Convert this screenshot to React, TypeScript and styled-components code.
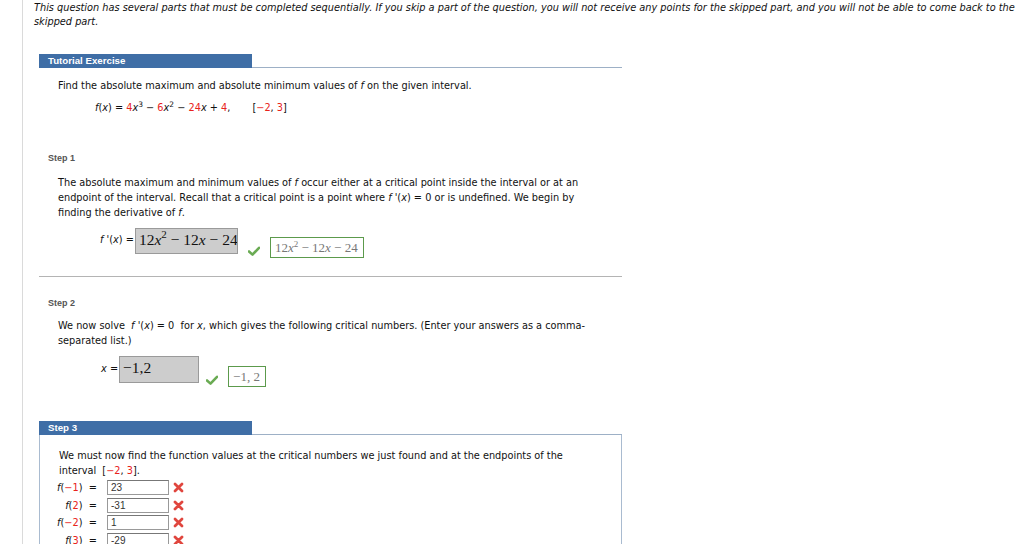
import React from "react";
import styled, { createGlobalStyle } from "styled-components";

const GlobalStyle = createGlobalStyle`
  html, body { margin: 0; padding: 0; background: #fff; }
  body { font-family: "DejaVu Sans", Verdana, sans-serif; color: #111; }
`;

const Page = styled.div`
  width: 1024px;
  height: 544px;
  overflow: hidden;
  display: flex;
`;

const Main = styled.div`
  margin-left: 22px;
  border-left: 1px solid #dadada;
  padding: 0 0 0 11px;
  flex: 1;
`;

const Intro = styled.p`
  margin: 1px 0 0;
  font-style: italic;
  font-size: 9.78px;
  line-height: 14px;
  color: #111;
`;

const Exercise = styled.div`
  margin: 25px 0 0 5px;
  width: 583px;
`;

const HeaderRow = styled.div<{ $top?: number }>`
  display: flex;
  align-items: flex-end;
  margin-top: ${(p) => p.$top ?? 0}px;
`;

const Tab = styled.div`
  width: 204px;
  height: 14px;
  padding-left: 9px;
  background: #3f6ea6;
  color: #fff;
  font-family: "Liberation Sans", Arial, sans-serif;
  font-weight: bold;
  font-size: 9.7px;
  line-height: 14px;
`;

const HeaderLine = styled.div`
  flex: 1;
  border-bottom: 1px solid #9db0c6;
`;

const Para = styled.p<{ $indent?: number; $top?: number }>`
  margin: ${(p) => p.$top ?? 0}px 0 0 ${(p) => p.$indent ?? 19}px;
  font-size: 9.75px;
  line-height: 15px;
  width: 530px;
`;

const Formula = styled.div`
  margin: 7px 0 0 56px;
  font-size: 9.75px;
  line-height: 15px;
  white-space: nowrap;
  sup { font-size: 7.5px; line-height: 0; vertical-align: 4px; }
`;

const Gap = styled.span`
  display: inline-block;
  width: 22px;
`;

const Red = styled.span`
  color: #e8231c;
`;

const I = styled.i``;

const StepLabel = styled.div<{ $top: number }>`
  margin: ${(p) => p.$top}px 0 0 9px;
  font-family: "Liberation Sans", Arial, sans-serif;
  font-weight: bold;
  font-size: 9px;
  line-height: 12px;
  color: #555;
`;

const AnswerRow = styled.div<{ $indent: number; $top: number }>`
  display: flex;
  align-items: flex-start;
  margin: ${(p) => p.$top}px 0 0 ${(p) => p.$indent}px;
  font-size: 9.75px;
`;

const AnswerLabel = styled.span<{ $pad: number }>`
  padding-top: ${(p) => p.$pad}px;
  margin-right: 1px;
  white-space: nowrap;
`;

const MathBox = styled.div<{ $w: number; $h: number }>`
  width: ${(p) => p.$w}px;
  height: ${(p) => p.$h}px;
  box-sizing: border-box;
  background: #cdcdcd;
  border: 1px solid #9a9a9a;
  font-family: "Liberation Serif", "Times New Roman", serif;
  font-size: 15.5px;
  line-height: 20px;
  padding: 1px 0 0 3px;
  color: #111;
  white-space: nowrap;
  overflow: hidden;
`;

const Sup = styled.sup`
  font-size: 11px;
  vertical-align: 7px;
  line-height: 0;
`;

const CheckWrap = styled.span<{ $top: number; $left: number }>`
  margin: ${(p) => p.$top}px 10px 0 ${(p) => p.$left}px;
  width: 12px;
  height: 10px;
  display: inline-flex;
`;

const Correct = styled.div<{ $top: number }>`
  margin-top: ${(p) => p.$top}px;
  border: 1px solid #5c9a4c;
  font-family: "Liberation Serif", "Times New Roman", serif;
  font-size: 13px;
  line-height: 19px;
  padding: 0 5px 0 4px;
  color: #777;
  white-space: nowrap;
`;

const SmallSup = styled.sup`
  font-size: 9px;
  vertical-align: 5px;
  line-height: 0;
`;

const Separator = styled.div`
  margin-top: 18px;
  border-top: 1px solid #b4b4b4;
`;

const Step3Box = styled.div`
  border: 1px solid #a9bbd0;
  border-top: none;
  padding: 8px 0 0;
  height: 120px;
`;

const ValueGrid = styled.div`
  display: grid;
  grid-template-columns: 47px 62px 14px;
  column-gap: 4px;
  row-gap: 2.5px;
  margin: 2px 0 0 16px;
  align-items: center;
  font-size: 9.75px;
`;

const ValueLabel = styled.span`
  text-align: right;
  white-space: nowrap;
`;

const ValueInput = styled.div`
  height: 15px;
  box-sizing: border-box;
  border: 1px solid #999;
  border-top-color: #777;
  font-family: "Liberation Sans", Arial, sans-serif;
  font-size: 10px;
  line-height: 13px;
  padding-left: 3px;
  color: #333;
`;

const Check = () => (
  <svg width="12" height="10" viewBox="0 0 12 10">
    <path d="M1 5.5 L4.5 8.6 L11 1.8" fill="none" stroke="#6aab53" strokeWidth="2.6" strokeLinecap="round" strokeLinejoin="round" />
  </svg>
);

const Cross = () => (
  <svg width="11" height="11" viewBox="0 0 11 11">
    <path d="M2 2 L9 9 M9 2 L2 9" fill="none" stroke="#e0463e" strokeWidth="2.8" strokeLinecap="round" />
  </svg>
);

const rows: { arg: string; val: string }[] = [
  { arg: "−1", val: "23" },
  { arg: "2", val: "-31" },
  { arg: "−2", val: "1" },
  { arg: "3", val: "-29" },
];

export default function App() {
  return (
    <>
      <GlobalStyle />
      <Page>
        <Main>
          <Intro>
            This question has several parts that must be completed sequentially. If you skip a part of the question, you will not receive any points for the skipped part, and you will not be able to come back to the skipped part.
          </Intro>
          <Exercise>
            <HeaderRow>
              <Tab>Tutorial Exercise</Tab>
              <HeaderLine />
            </HeaderRow>
            <Para $top={10}>
              Find the absolute maximum and absolute minimum values of <I>f</I> on the given interval.
            </Para>
            <Formula>
              <I>f</I>(<I>x</I>) = <Red>4</Red><I>x</I><sup>3</sup> − <Red>6</Red><I>x</I><sup>2</sup> − <Red>24</Red><I>x</I> + <Red>4</Red>,<Gap />[<Red>−2</Red>, <Red>3</Red>]
            </Formula>

            <StepLabel $top={37}>Step 1</StepLabel>
            <Para $top={11}>
              The absolute maximum and minimum values of <I>f</I> occur either at a critical point inside the interval or at an endpoint of the interval. Recall that a critical point is a point where <I>f</I> '(<I>x</I>) = 0 or is undefined. We begin by finding the derivative of <I>f</I>.
            </Para>
            <AnswerRow $indent={61} $top={8}>
              <AnswerLabel $pad={6}>
                <I>f</I> '(<I>x</I>) =
              </AnswerLabel>
              <MathBox $w={103} $h={26}>
                12<I>x</I>
                <Sup>2</Sup> − 12<I>x</I> − 24
              </MathBox>
              <CheckWrap $top={18} $left={10}>
                <Check />
              </CheckWrap>
              <Correct $top={9}>
                12<I>x</I>
                <SmallSup>2</SmallSup> − 12<I>x</I> − 24
              </Correct>
            </AnswerRow>
            <Separator />

            <StepLabel $top={20}>Step 2</StepLabel>
            <Para $top={9}>
              We now solve &nbsp;<I>f</I> '(<I>x</I>) = 0 &nbsp;for <I>x</I>, which gives the following critical numbers. (Enter your answers as a comma-separated list.)
            </Para>
            <AnswerRow $indent={62} $top={8}>
              <AnswerLabel $pad={7}>
                <I>x</I> =
              </AnswerLabel>
              <MathBox $w={80} $h={27}>−1,2</MathBox>
              <CheckWrap $top={19} $left={7}>
                <Check />
              </CheckWrap>
              <Correct $top={10}>−1, 2</Correct>
            </AnswerRow>

            <HeaderRow $top={34}>
              <Tab>Step 3</Tab>
              <HeaderLine />
            </HeaderRow>
            <Step3Box>
              <Para $indent={19} $top={5}>
                We must now find the function values at the critical numbers we just found and at the endpoints of the interval &nbsp;[<Red>−2</Red>, <Red>3</Red>].
              </Para>
              <ValueGrid>
                {rows.map((r) => (
                  <React.Fragment key={r.arg}>
                    <ValueLabel>
                      <I>f</I>(<Red>{r.arg}</Red>) &nbsp;= &nbsp;
                    </ValueLabel>
                    <ValueInput>{r.val}</ValueInput>
                    <Cross />
                  </React.Fragment>
                ))}
              </ValueGrid>
            </Step3Box>
          </Exercise>
        </Main>
      </Page>
    </>
  );
}
